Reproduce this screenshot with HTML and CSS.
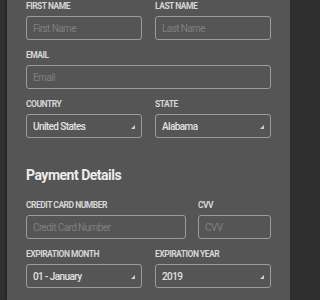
FILE: index.html
```html
<!DOCTYPE html>
<html>
<head>
<meta charset="utf-8">
<link rel="stylesheet" href="styles.css">
</head>
<body>
<div class="panel">
  <div class="row two">
    <div class="group">
      <label class="lbl">FIRST NAME</label>
      <input class="field" placeholder="First Name">
    </div>
    <div class="group">
      <label class="lbl">LAST NAME</label>
      <input class="field" placeholder="Last Name">
    </div>
  </div>
  <div class="group">
    <label class="lbl">EMAIL</label>
    <input class="field" placeholder="Email">
  </div>
  <div class="row two">
    <div class="group">
      <label class="lbl">COUNTRY</label>
      <div class="select"><span>United States</span></div>
    </div>
    <div class="group">
      <label class="lbl">STATE</label>
      <div class="select"><span>Alabama</span></div>
    </div>
  </div>
  <h2 class="heading">Payment Details</h2>
  <div class="row cc">
    <div class="group">
      <label class="lbl">CREDIT CARD NUMBER</label>
      <input class="field" placeholder="Credit Card Number">
    </div>
    <div class="group">
      <label class="lbl">CVV</label>
      <input class="field" placeholder="CVV">
    </div>
  </div>
  <div class="row two">
    <div class="group">
      <label class="lbl">EXPIRATION MONTH</label>
      <div class="select"><span>01 - January</span></div>
    </div>
    <div class="group">
      <label class="lbl">EXPIRATION YEAR</label>
      <div class="select"><span>2019</span></div>
    </div>
  </div>
</div>
</body>
</html>
```

FILE: styles.css
```css
html, body {
  margin: 0;
  padding: 0;
  background: #2f2f2f;
  height: 300px;
  overflow: hidden;
}
body {
  font-family: "Roboto", "Liberation Sans", sans-serif;
}
.panel {
  margin-left: 7px;
  width: 283px;
  height: 300px;
  background: #555555;
  box-shadow: -1px 0 2px rgba(0,0,0,0.35);
  box-sizing: border-box;
  padding: 1px 19px 0 19px;
}
.row {
  display: grid;
}
.row.two {
  grid-template-columns: 116px 116px;
  column-gap: 13px;
}
.row.cc {
  grid-template-columns: 160px 73px;
  column-gap: 12px;
}
.group {
  display: flex;
  flex-direction: column;
  margin-bottom: 10px;
}
.lbl {
  font-size: 8.5px;
  line-height: 11px;
  font-weight: bold;
  letter-spacing: -0.5px;
  color: #d6d6d6;
  margin-bottom: 4px;
  white-space: nowrap;
}
.field, .select {
  box-sizing: border-box;
  height: 24px;
  border: 1px solid #9c9c9c;
  border-radius: 3px;
  background: transparent;
  padding: 0 6px;
  font-family: inherit;
  font-size: 10px;
  letter-spacing: -0.6px;
  color: #dddddd;
  outline: none;
  width: 100%;
}
.field::placeholder {
  color: #7f7f7f;
}
.select {
  position: relative;
  display: flex;
  align-items: center;
}
.select span {
  color: #e2e2e2;
  font-weight: 500;
}
.select::after {
  content: "";
  position: absolute;
  right: 6px;
  top: 10px;
  width: 0;
  height: 0;
  border-left: 4px solid transparent;
  border-bottom: 4px solid #d0d0d0;
}
.heading {
  margin: 18px 0 16px 0;
  font-size: 14px;
  line-height: 18px;
  font-weight: bold;
  letter-spacing: -0.5px;
  color: #ececec;
}
```
